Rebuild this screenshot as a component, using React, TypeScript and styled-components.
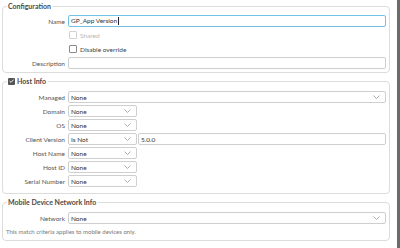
import styled, { createGlobalStyle } from 'styled-components';

const GlobalStyle = createGlobalStyle`
  html, body {
    margin: 0;
    padding: 0;
    background: #fff;
  }
  body {
    font-family: Lato, "Open Sans", sans-serif;
    color: #333;
  }
`;

const Page = styled.div`
  box-sizing: border-box;
  width: 400px;
  height: 248px;
  padding: 0 7px 0 2px;
  border-right: 3px solid #6b6b6b;
  display: flex;
  flex-direction: column;
  gap: 2px;
  overflow: hidden;
`;

const Section = styled.fieldset<{ $bottom?: number; $top?: number }>`
  margin: 0;
  padding: ${p => p.$top ?? 3}px 3px ${p => p.$bottom ?? 3}px 1px;
  border: 1px solid #dcdcdc;
  border-radius: 4px;
  min-width: 0;
  display: flex;
  flex-direction: column;
  gap: 2px;
`;

const Legend = styled.legend`
  margin-left: 3px;
  padding: 0 2px 0 1px;
  font-size: 7px;
  line-height: 12px;
  font-weight: 700;
  color: #4a4a4a;
  display: flex;
  align-items: center;
  gap: 2px;
`;

const Row = styled.div`
  display: grid;
  grid-template-columns: 61px 1fr;
  column-gap: 3px;
  align-items: center;
  height: 12px;
`;

const Label = styled.span`
  text-align: right;
  font-size: 6.5px;
  color: #555;
  white-space: nowrap;
`;

const Box = styled.div<{ $focus?: boolean; $width?: number }>`
  box-sizing: border-box;
  height: 12px;
  width: ${p => (p.$width ? `${p.$width}px` : '100%')};
  flex: ${p => (p.$width ? 'none' : '1')};
  border: 1px solid ${p => (p.$focus ? '#72c2e6' : '#cfcfcf')};
  border-radius: 2px;
  background: #fff;
  display: flex;
  align-items: center;
  justify-content: space-between;
  padding: 0 5px 0 2px;
  font-size: 6.5px;
  color: #333;
  white-space: nowrap;
`;

const Caret = styled.span`
  display: inline-block;
  width: 0.6px;
  height: 8px;
  background: #222;
  margin-left: 0.5px;
  vertical-align: middle;
`;

const Fields = styled.div`
  display: flex;
  gap: 1px;
  align-items: center;
`;

const Check = styled.span<{ $disabled?: boolean }>`
  box-sizing: border-box;
  width: 8px;
  height: 8px;
  border: 1px solid ${p => (p.$disabled ? '#d2d2d2' : '#8a8a8a')};
  border-radius: 1px;
  background: #fff;
  flex: none;
`;

const Checked = styled.span`
  width: 7px;
  height: 7px;
  border-radius: 1px;
  background: #555;
  display: flex;
  align-items: center;
  justify-content: center;
  flex: none;
`;

const Option = styled.label<{ $disabled?: boolean }>`
  grid-column: 2;
  display: flex;
  align-items: center;
  gap: 3px;
  padding-left: 1px;
  font-size: 6.5px;
  color: ${p => (p.$disabled ? '#b5b5b5' : '#444')};
`;

const Note = styled.div`
  padding-left: 2px;
  font-size: 6px;
  line-height: 9px;
  color: #777;
  margin-top: 1px;
`;

const Chevron = () => (
  <svg width="7" height="4" viewBox="0 0 7 4">
    <path d="M0.5 0.5 L3.5 3.5 L6.5 0.5" fill="none" stroke="#9a9a9a" strokeWidth="0.8" />
  </svg>
);

const Select = ({ value, width }: { value: string; width?: number }) => (
  <Box $width={width}>
    <span>{value}</span>
    <Chevron />
  </Box>
);

const SelectRow = ({ label }: { label: string }) => (
  <Row>
    <Label>{label}</Label>
    <Fields>
      <Select value="None" width={69} />
    </Fields>
  </Row>
);

export default function App() {
  return (
    <>
      <GlobalStyle />
      <Page>
        <Section>
          <Legend>Configuration</Legend>
          <Row>
            <Label>Name</Label>
            <Box $focus>
              <span>
                GP_App Version
                <Caret />
              </span>
            </Box>
          </Row>
          <Row>
            <Option $disabled>
              <Check $disabled />
              Shared
            </Option>
          </Row>
          <Row>
            <Option>
              <Check />
              Disable override
            </Option>
          </Row>
          <Row>
            <Label>Description</Label>
            <Box />
          </Row>
        </Section>

        <Section $top={4} $bottom={6}>
          <Legend>
            <Checked>
              <svg width="5" height="4" viewBox="0 0 5 4">
                <path d="M0.5 2 L2 3.4 L4.6 0.6" fill="none" stroke="#fff" strokeWidth="0.9" />
              </svg>
            </Checked>
            Host Info
          </Legend>
          <Row>
            <Label>Managed</Label>
            <Select value="None" />
          </Row>
          <SelectRow label="Domain" />
          <SelectRow label="OS" />
          <Row>
            <Label>Client Version</Label>
            <Fields>
              <Select value="Is Not" width={69} />
              <Box>5.0.0</Box>
            </Fields>
          </Row>
          <SelectRow label="Host Name" />
          <SelectRow label="Host ID" />
          <SelectRow label="Serial Number" />
        </Section>

        <Section $top={4} $bottom={4}>
          <Legend>Mobile Device Network Info</Legend>
          <Row>
            <Label>Network</Label>
            <Select value="None" />
          </Row>
          <Note>This match criteria applies to mobile devices only.</Note>
        </Section>
      </Page>
    </>
  );
}
